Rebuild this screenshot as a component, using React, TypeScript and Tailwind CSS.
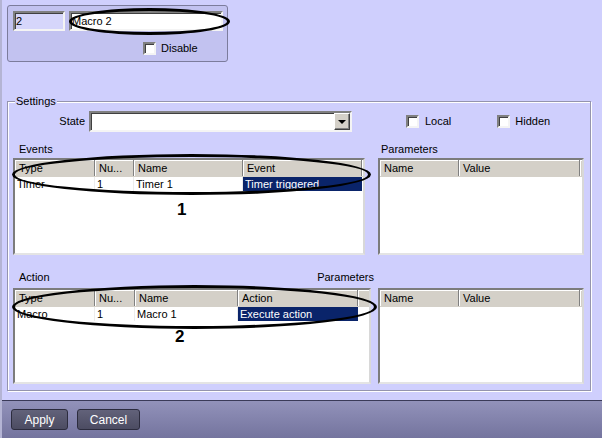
import React from "react";

type Col = { label: string; w: number };
type Cell = { text: string; selected?: boolean };

const sunken =
  "border-2 border-t-[#808080] border-l-[#808080] border-r-[#f4f4f4] border-b-[#f4f4f4] shadow-[inset_1px_1px_0_#404040]";

const CheckBox = ({ label, gap = 5 }: { label: string; gap?: number }) => (
  <div className="flex items-center" style={{ gap }}>
    <div className={`w-[13px] h-[13px] bg-white ${sunken}`} />
    <span className="text-[11px] leading-[13px] text-black">{label}</span>
  </div>
);

const ListView = ({
  cols,
  rows,
  width,
  height,
}: {
  cols: Col[];
  rows: Cell[][];
  width: number;
  height: number;
}) => (
  <div
    className="bg-white border-2 border-t-[#7c7c7c] border-l-[#7c7c7c] border-r-[#d8d8d8] border-b-[#e4e4e4] overflow-hidden"
    style={{ width, height }}
  >
    <div className="flex h-[17px] bg-[#d4d0c8] border-b border-b-[#d4d0c8]">
      {cols.map((c) => (
        <div
          key={c.label}
          className="h-full shrink-0 border-r border-r-[#808080] shadow-[inset_1px_1px_0_#fff] pl-[4px] text-[11px] leading-[17px] text-black truncate"
          style={{ width: c.w }}
        >
          {c.label}
        </div>
      ))}
      <div className="flex-1 h-full shadow-[inset_1px_1px_0_#fff]" />
    </div>
    {rows.map((r, i) => (
      <div key={i} className="flex h-[14px]">
        {r.map((cell, j) => (
          <div
            key={j}
            className={`shrink-0 h-full text-[11px] leading-[14px] truncate ${
              cell.selected
                ? "bg-[#0a246a] text-white pl-[2px]"
                : "text-black border-r border-r-[#ececec] pl-[2px]"
            }`}
            style={{ width: cols[j].w }}
          >
            {cell.text}
          </div>
        ))}
      </div>
    ))}
  </div>
);

const paramCols: Col[] = [
  { label: "Name", w: 79 },
  { label: "Value", w: 121 },
];

export default function App() {
  return (
    <div className="relative w-[602px] h-[438px] bg-[#cfcffd] border-l-2 border-l-[#b4b4d4] flex flex-col overflow-hidden font-['Liberation_Sans',Arial,sans-serif] text-black">
      {/* macro header box */}
      <div className="mt-[5px] ml-[5px] w-[221px] h-[57px] rounded-[3px] border border-[#7c7c9c] bg-[#c2c2f0] pt-[5px] pl-[5px]">
        <div className="flex gap-[4px]">
          <div className={`w-[52px] h-[20px] bg-[#d6d6fb] ${sunken} text-[11px] leading-[16px] pl-[1px]`}>
            2
          </div>
          <div className={`w-[154px] h-[20px] bg-white ${sunken} text-[11px] leading-[16px] pl-[1px]`}>
            Macro 2
          </div>
        </div>
        <div className="mt-[11px] pl-[130px]">
          <CheckBox label="Disable" />
        </div>
      </div>

      {/* settings group */}
      <div className="relative mt-[39px] ml-[5px] w-[584px] h-[290px] border border-[#9494ae] shadow-[1px_1px_0_#fff,inset_1px_1px_0_#fff]">
        <span className="absolute -top-[7px] left-[7px] px-[1px] bg-[#cfcffd] text-[11px] leading-[13px]">
          Settings
        </span>

        <div className="mt-[9px] flex items-center">
          <span className="w-[77px] text-right text-[11px] leading-[13px]">State</span>
          <div className={`ml-[4px] w-[263px] h-[21px] bg-white ${sunken} flex justify-end items-start`}>
            <div className="w-[16px] h-[17px] bg-[#d4d0c8] border border-t-white border-l-white border-r-[#404040] border-b-[#404040] shadow-[inset_-1px_-1px_0_#808080] flex items-center justify-center">
              <div className="w-0 h-0 border-l-[4px] border-r-[4px] border-t-[4px] border-l-transparent border-r-transparent border-t-black" />
            </div>
          </div>
          <div className="ml-[54px]">
            <CheckBox label="Local" gap={6} />
          </div>
          <div className="ml-[46px]">
            <CheckBox label="Hidden" gap={5} />
          </div>
        </div>

        <div className="mt-[11px] ml-[5px] flex gap-[13px]">
          <div>
            <div className="h-[13px] pl-[6px] text-[11px] leading-[13px]">Events</div>
            <div className="mt-[2px]">
              <ListView
                width={352}
                height={97}
                cols={[
                  { label: "Type", w: 80 },
                  { label: "Nu...", w: 39 },
                  { label: "Name", w: 109 },
                  { label: "Event", w: 119 },
                ]}
                rows={[
                  [
                    { text: "Timer" },
                    { text: "1" },
                    { text: "Timer 1" },
                    { text: "Timer triggered", selected: true },
                  ],
                ]}
              />
            </div>
          </div>
          <div>
            <div className="h-[13px] pl-[3px] text-[11px] leading-[13px]">Parameters</div>
            <div className="mt-[2px]">
              <ListView width={206} height={97} cols={paramCols} rows={[]} />
            </div>
          </div>
        </div>

        <div className="mt-[16px] ml-[5px] w-[361px] flex justify-between h-[13px] text-[11px] leading-[13px]">
          <span className="pl-[6px]">Action</span>
          <span>Parameters</span>
        </div>
        <div className="mt-[4px] ml-[5px] flex gap-[7px]">
          <ListView
            width={358}
            height={96}
            cols={[
              { label: "Type", w: 80 },
              { label: "Nu...", w: 40 },
              { label: "Name", w: 103 },
              { label: "Action", w: 120 },
            ]}
            rows={[
              [
                { text: "Macro" },
                { text: "1" },
                { text: "Macro 1" },
                { text: "Execute action", selected: true },
              ],
            ]}
          />
          <ListView width={206} height={96} cols={paramCols} rows={[]} />
        </div>
      </div>

      {/* bottom bar */}
      <div className="mt-auto h-[38px] border-t border-t-[#3a3a58] bg-gradient-to-b from-[#9292ba] to-[#74749e] pt-[8px] pl-[9px] flex gap-[9px]">
        <button className="w-[57px] h-[21px] rounded-[3px] border border-[#2c2c3e] bg-gradient-to-b from-[#62627a] to-[#4c4c62] text-white text-[12px] leading-[18px] font-['Liberation_Sans_Narrow','Liberation_Sans',sans-serif]">
          Apply
        </button>
        <button className="w-[63px] h-[21px] rounded-[3px] border border-[#2c2c3e] bg-gradient-to-b from-[#62627a] to-[#4c4c62] text-white text-[12px] leading-[18px] font-['Liberation_Sans_Narrow','Liberation_Sans',sans-serif]">
          Cancel
        </button>
      </div>

      {/* annotations */}
      <div className="absolute left-[67px] top-[8px] w-[161px] h-[27px] rounded-[50%] border-[3px] border-black" />
      <div className="absolute left-[10px] top-[154px] w-[359px] h-[41px] rounded-[50%] border-[3px] border-black" />
      <div className="absolute left-[10px] top-[285px] w-[365px] h-[44px] rounded-[50%] border-[3px] border-black" />
      <span className="absolute left-[175px] top-[200px] text-[17px] leading-[20px] font-bold">1</span>
      <span className="absolute left-[173px] top-[327px] text-[17px] leading-[20px] font-bold">2</span>
    </div>
  );
}
